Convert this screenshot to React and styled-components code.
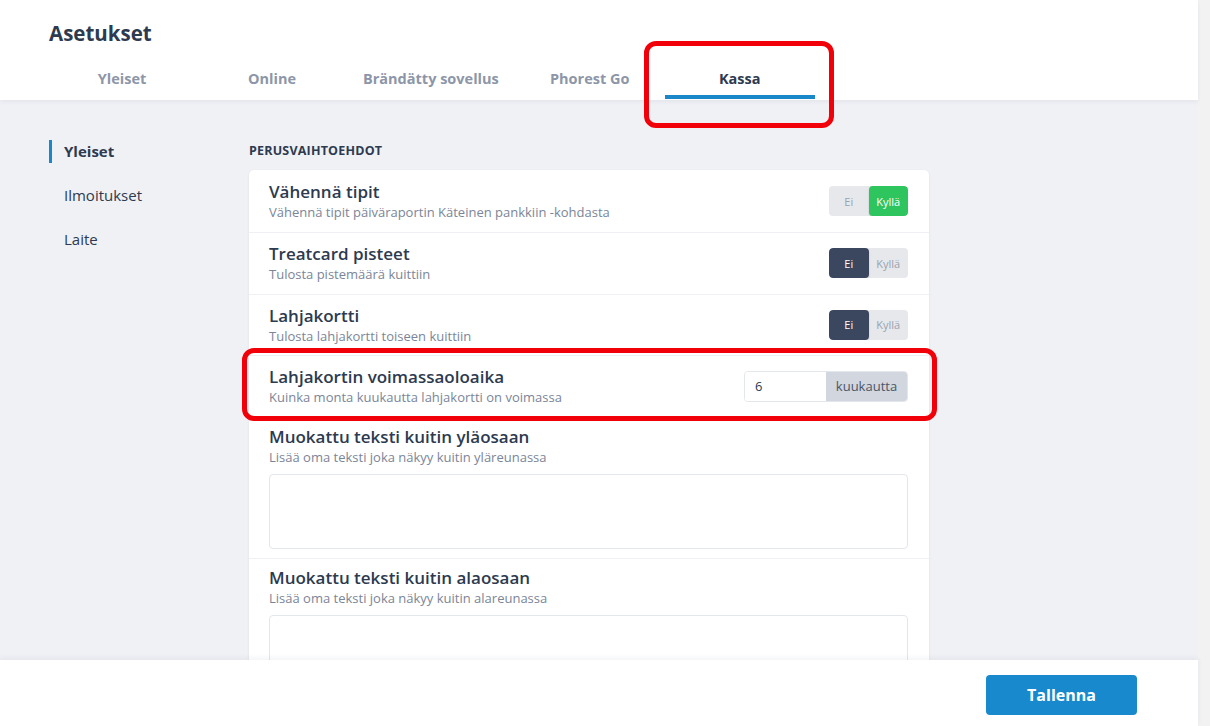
import React, { useState } from 'react';
import styled, { createGlobalStyle } from 'styled-components';

const GlobalStyle = createGlobalStyle`
  html, body {
    margin: 0;
    padding: 0;
    height: 100%;
    overflow: hidden;
    font-family: "Open Sans", "Noto Sans", sans-serif;
    color: #2d3a4f;
  }
  * { box-sizing: border-box; }
`;

const Shell = styled.div`
  display: flex;
  width: 1210px;
  height: 726px;
  position: relative;
`;

const Main = styled.div`
  flex: 1;
  display: flex;
  flex-direction: column;
  background: #f0f1f5;
  min-width: 0;
`;

const ScrollTrack = styled.div`
  width: 12px;
  background: #f2f2f2;
`;

const Header = styled.header`
  height: 100px;
  background: #fff;
  padding: 0 48px;
  display: flex;
  flex-direction: column;
  box-shadow: 0 2px 4px rgba(40, 50, 80, 0.06);
  position: relative;
  z-index: 2;
`;

const Title = styled.h1`
  margin: 0;
  padding-top: 20px;
  padding-left: 1px;
  font-size: 20.5px;
  line-height: 26px;
  font-weight: 700;
  color: #2d3a4f;
`;

const Tabs = styled.nav`
  display: flex;
  margin-top: auto;
  margin-left: -1px;
`;

const Tab = styled.div`
  min-width: 150px;
  padding: 0 16px 6px;
  text-align: center;
  font-size: 14.5px;
  font-weight: 700;
  line-height: 20px;
  color: ${p => (p.active ? '#2d3a4f' : '#8d96a8')};
  border-bottom: 4px solid ${p => (p.active ? '#1a87c9' : 'transparent')};
  margin-bottom: 1px;
  white-space: nowrap;
`;

const Body = styled.div`
  flex: 1;
  overflow: hidden;
  display: flex;
  padding: 40px 0 0 49px;
`;

const Sidebar = styled.aside`
  width: 200px;
  display: flex;
  flex-direction: column;
  gap: 21px;
`;

const SideItem = styled.div`
  height: 23px;
  line-height: 23px;
  padding-left: 12px;
  border-left: 3px solid ${p => (p.active ? '#1a87c9' : 'transparent')};
  font-size: 15px;
  font-weight: ${p => (p.active ? 700 : 400)};
  color: #2d3a4f;
`;

const Content = styled.section`
  width: 680px;
`;

const SectionLabel = styled.h2`
  margin: 3px 0 11px;
  font-size: 12.5px;
  line-height: 16px;
  font-weight: 700;
  letter-spacing: 0.2px;
  color: #2d3a4f;
`;

const Card = styled.div`
  background: #fff;
  border-radius: 5px;
  box-shadow: 0 1px 3px rgba(40, 50, 80, 0.08);
`;

const Row = styled.div`
  display: flex;
  padding: 0 21px 0 20px;
  height: ${p => (p.first ? '62px' : '61.5px')};
  align-items: center;
  border-top: ${p => (p.first ? 'none' : '1px solid #eef0f3')};
`;

const StackedRow = styled.div`
  display: flex;
  flex-direction: column;
  padding: 8px 21px 9px 20px;
  border-top: 1px solid #eef0f3;
`;

const Texts = styled.div`
  flex: 1;
  display: flex;
  flex-direction: column;
`;

const RowTitle = styled.div`
  font-size: 17px;
  line-height: 22px;
  font-weight: 600;
  color: #2d3a4f;
`;

const RowSub = styled.div`
  font-size: 13px;
  line-height: 18px;
  color: #7b8598;
`;

const Toggle = styled.div`
  display: flex;
  width: 79px;
  height: 30px;
  border-radius: 4px;
  overflow: hidden;
  background: #e6e8ec;
`;

const ToggleOpt = styled.div`
  flex: 1;
  display: flex;
  align-items: center;
  justify-content: center;
  font-size: 11px;
  color: ${p => (p.on ? '#fff' : '#9aa2b1')};
  background: ${p => (p.on ? (p.tone === 'yes' ? '#2ec45e' : '#3b475e') : 'transparent')};
  border-radius: ${p => (p.on ? '4px' : '0')};
  box-shadow: ${p => (p.on ? '0 1px 2px rgba(0,0,0,0.15)' : 'none')};
`;

const InputGroup = styled.div`
  display: flex;
  height: 31px;
  border: 1px solid #e3e6eb;
  border-radius: 4px;
  overflow: hidden;
`;

const NumberInput = styled.input`
  width: 81px;
  border: none;
  outline: none;
  padding: 0 10px;
  font-family: inherit;
  font-size: 13px;
  color: #2d3a4f;
`;

const Addon = styled.div`
  width: 81px;
  background: #d2d6de;
  color: #4a5568;
  font-size: 13px;
  display: flex;
  align-items: center;
  justify-content: center;
`;

const TextArea = styled.textarea`
  margin-top: 8px;
  height: 75px;
  border: 1px solid #e3e6eb;
  border-radius: 4px;
  resize: none;
  outline: none;
  font-family: inherit;
`;

const Footer = styled.footer`
  height: 66px;
  background: #fff;
  display: flex;
  align-items: flex-start;
  justify-content: flex-end;
  padding: 15px 61px 0 0;
  box-shadow: 0 -2px 5px rgba(40, 50, 80, 0.06);
  position: relative;
  z-index: 2;
`;

const SaveButton = styled.button`
  width: 151px;
  height: 40px;
  border: none;
  border-radius: 4px;
  background: #1789cc;
  color: #fff;
  font-family: inherit;
  font-size: 16px;
  font-weight: 700;
  cursor: pointer;
`;

const Highlight = styled.div`
  position: absolute;
  border: 5px solid #f2000a;
  border-radius: 12px;
  pointer-events: none;
  z-index: 5;
`;

const YesNo = ({ value }) => (
  <Toggle>
    <ToggleOpt on={!value} tone="no">Ei</ToggleOpt>
    <ToggleOpt on={value} tone="yes">Kyllä</ToggleOpt>
  </Toggle>
);

const tabs = ['Yleiset', 'Online', 'Brändätty sovellus', 'Phorest Go', 'Kassa'];
const sideItems = ['Yleiset', 'Ilmoitukset', 'Laite'];

const App = () => {
  const [months, setMonths] = useState('6');

  return (
    <Shell>
      <GlobalStyle />
      <Main>
        <Header>
          <Title>Asetukset</Title>
          <Tabs>
            {tabs.map(t => (
              <Tab key={t} active={t === 'Kassa'}>{t}</Tab>
            ))}
          </Tabs>
        </Header>
        <Body>
          <Sidebar>
            {sideItems.map((s, i) => (
              <SideItem key={s} active={i === 0}>{s}</SideItem>
            ))}
          </Sidebar>
          <Content>
            <SectionLabel>PERUSVAIHTOEHDOT</SectionLabel>
            <Card>
              <Row first>
                <Texts>
                  <RowTitle>Vähennä tipit</RowTitle>
                  <RowSub>Vähennä tipit päiväraportin Käteinen pankkiin -kohdasta</RowSub>
                </Texts>
                <YesNo value />
              </Row>
              <Row>
                <Texts>
                  <RowTitle>Treatcard pisteet</RowTitle>
                  <RowSub>Tulosta pistemäärä kuittiin</RowSub>
                </Texts>
                <YesNo value={false} />
              </Row>
              <Row>
                <Texts>
                  <RowTitle>Lahjakortti</RowTitle>
                  <RowSub>Tulosta lahjakortti toiseen kuittiin</RowSub>
                </Texts>
                <YesNo value={false} />
              </Row>
              <Row>
                <Texts>
                  <RowTitle>Lahjakortin voimassaoloaika</RowTitle>
                  <RowSub>Kuinka monta kuukautta lahjakortti on voimassa</RowSub>
                </Texts>
                <InputGroup>
                  <NumberInput value={months} onChange={e => setMonths(e.target.value)} />
                  <Addon>kuukautta</Addon>
                </InputGroup>
              </Row>
              <StackedRow>
                <RowTitle>Muokattu teksti kuitin yläosaan</RowTitle>
                <RowSub>Lisää oma teksti joka näkyy kuitin yläreunassa</RowSub>
                <TextArea />
              </StackedRow>
              <StackedRow>
                <RowTitle>Muokattu teksti kuitin alaosaan</RowTitle>
                <RowSub>Lisää oma teksti joka näkyy kuitin alareunassa</RowSub>
                <TextArea />
              </StackedRow>
            </Card>
          </Content>
        </Body>
        <Footer>
          <SaveButton>Tallenna</SaveButton>
        </Footer>
      </Main>
      <ScrollTrack />
      <Highlight style={{ left: 644, top: 41, width: 190, height: 87 }} />
      <Highlight style={{ left: 242, top: 348, width: 695, height: 73 }} />
    </Shell>
  );
};

export default App;
